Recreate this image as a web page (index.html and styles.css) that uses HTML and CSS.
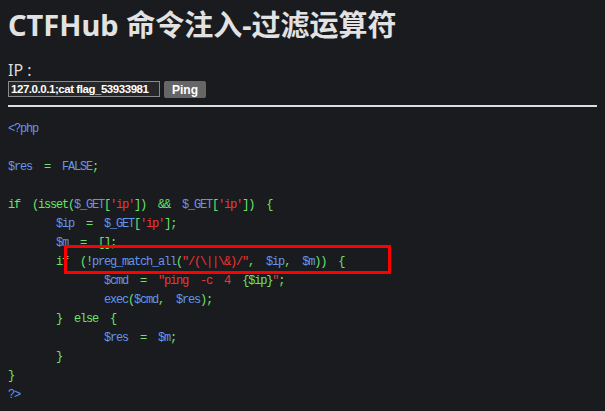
FILE: index.html
```html
<!DOCTYPE html>
<html lang="en">
<head>
    <meta charset="UTF-8">
    <meta name="viewport" content="width=device-width, initial-scale=1.0">
    <title>CTFHub 命令注入-过滤运算符</title>
    <link rel="stylesheet" href="styles.css">
</head>
<body>

    <h1>CTFHub 命令注入-过滤运算符</h1>

    <form class="ping-form">
        <label class="ip-label">IP :</label>
        <div class="ip-row">
            <input class="ip-input" type="text" value="127.0.0.1;cat flag_53933981">
            <button class="ping-btn" type="button">Ping</button>
        </div>
    </form>
    <hr class="line">

    <div class="source">
<pre class="code"><span class="d">&lt;?php</span>

<span class="d">$res</span>  <span class="k">=</span>  <span class="d">FALSE</span><span class="k">;</span>

<span class="k">if  (isset(</span><span class="d">$_GET</span><span class="k">[</span><span class="s">'ip'</span><span class="k">])  &amp;&amp;  </span><span class="d">$_GET</span><span class="k">[</span><span class="s">'ip'</span><span class="k">])  {</span>
        <span class="d">$ip</span>  <span class="k">=</span>  <span class="d">$_GET</span><span class="k">[</span><span class="s">'ip'</span><span class="k">];</span>
        <span class="d">$m</span>  <span class="k">=  [];</span>
        <span class="k">if  (!</span><span class="d">preg_match_all</span><span class="k">(</span><span class="s">"/(\||\&amp;)/"</span><span class="k">,  </span><span class="d">$ip</span><span class="k">,  </span><span class="d">$m</span><span class="k">))  {</span>
                <span class="d">$cmd</span>  <span class="k">=</span>  <span class="s">"ping  -c  4  </span><span class="k">{$ip}</span><span class="s">"</span><span class="k">;</span>
                <span class="d">exec</span><span class="k">(</span><span class="d">$cmd</span><span class="k">,  </span><span class="d">$res</span><span class="k">);</span>
        <span class="k">}  else  {</span>
                <span class="d">$res</span>  <span class="k">=</span>  <span class="d">$m</span><span class="k">;</span>
        <span class="k">}</span>
<span class="k">}</span>
<span class="d">?&gt;</span></pre>
        <div class="mark"></div>
    </div>

</body>
</html>
```

FILE: styles.css
```css
      body {
          background-color: #1a1b1e;
          color: #ddd;
          font-family: 'Noto Sans', 'Noto Sans CJK SC', sans-serif;
          margin: 8px;
      }
      h1 {
          font-size: 29px;
          font-weight: bold;
          color: #e2e2e2;
          margin: 0;
          line-height: 34px;
      }
      .ping-form {
          margin-top: 18px;
      }
      .ip-label {
          display: block;
          font-size: 16px;
          line-height: 20px;
          color: #ddd;
      }
      .ip-row {
          display: flex;
          gap: 4px;
          margin-top: 1px;
      }
      .ip-input {
          width: 146px;
          height: 14px;
          padding: 0 2px;
          background-color: #26272a;
          color: #fff;
          border: 1px solid #8a8a8a;
          font-family: 'Liberation Sans', sans-serif;
          font-size: 11.5px;
          font-weight: bold;
          letter-spacing: -0.45px;
      }
      .ping-btn {
          height: 17px;
          padding: 0 8px;
          background-color: #666;
          color: #fff;
          border: none;
          border-radius: 2px;
          font-family: 'Liberation Sans', sans-serif;
          font-size: 12px;
          font-weight: bold;
      }
      .line {
          margin: 7px -8px 0 0;
          border: none;
          border-top: 2px solid #ddd;
          height: 0;
      }
      .source {
          position: relative;
      }
      .code {
          margin: 13px 0 0 0;
          font-family: 'Liberation Mono', monospace;
          font-size: 12px;
          letter-spacing: -1.2px;
          line-height: 19px;
          color: #5a8ee6;
      }
      .d {
          color: #6096f0;
      }
      .k {
          color: #6ae46a;
      }
      .s {
          color: #f43434;
      }
      .mark {
          position: absolute;
          left: 56px;
          top: 125px;
          width: 321px;
          height: 23px;
          border: 3px solid #ff0000;
      }
```
